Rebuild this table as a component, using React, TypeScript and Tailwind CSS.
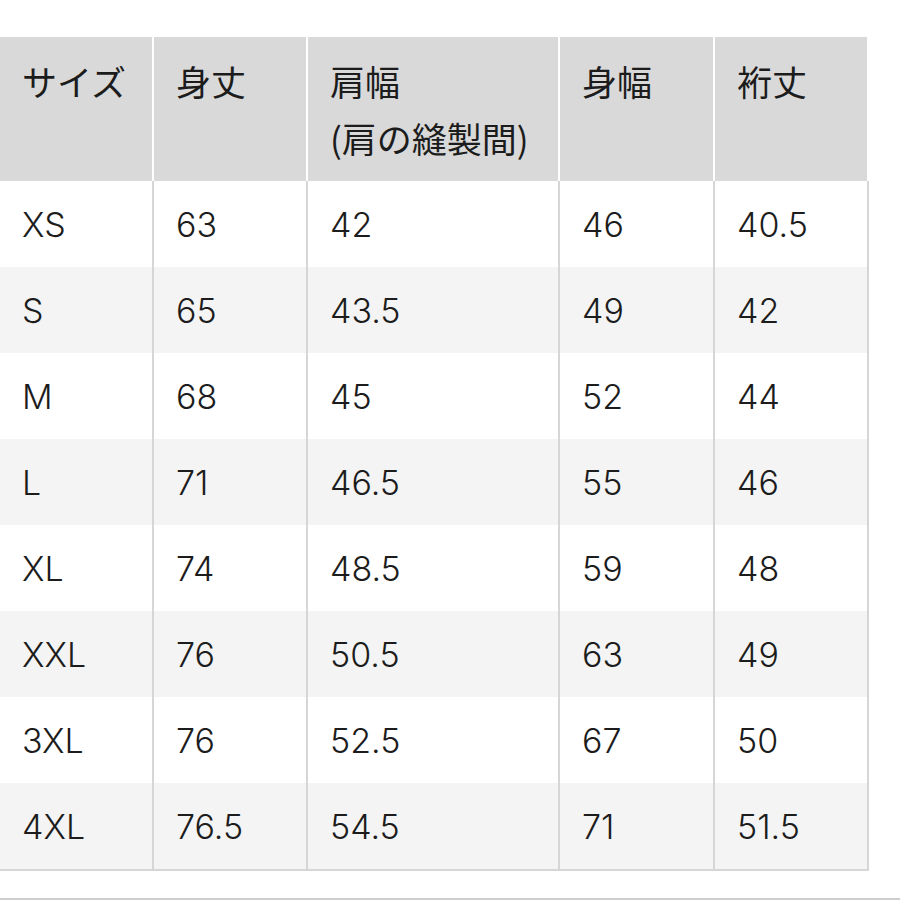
const headers = [["サイズ"], ["身丈"], ["肩幅", "(肩の縫製間)"], ["身幅"], ["裄丈"]];

const rows = [
  ["XS", "63", "42", "46", "40.5"],
  ["S", "65", "43.5", "49", "42"],
  ["M", "68", "45", "52", "44"],
  ["L", "71", "46.5", "55", "46"],
  ["XL", "74", "48.5", "59", "48"],
  ["XXL", "76", "50.5", "63", "49"],
  ["3XL", "76", "52.5", "67", "50"],
  ["4XL", "76.5", "54.5", "71", "51.5"],
];

const cols = "grid grid-cols-[152px_152px_250px_153px_152px] gap-x-[2px]";

export default function App() {
  return (
    <div
      className="w-[900px] h-[900px] bg-white text-[#1c1c1c] overflow-hidden"
      style={{ fontFamily: 'Inter, "Liberation Sans", "Noto Sans CJK JP", sans-serif' }}
    >
      <div className="pt-[37px] w-[869px]">
        {/* header */}
        <div className={`${cols} h-[144px] bg-white pr-[2px]`}>
          {headers.map((lines, i) => (
            <div
              key={i}
              className="bg-[#d9d9d9] pl-[22px] pt-[15px] text-[35px] leading-[57px]"
              style={{ fontFamily: '"Noto Sans CJK JP", "Liberation Sans", sans-serif' }}
            >
              {lines.map((l) => (
                <div key={l}>{l}</div>
              ))}
            </div>
          ))}
        </div>

        {/* body */}
        {rows.map((row, r) => (
          <div key={row[0]} className={`${cols} h-[86px] bg-[#d6d6d6] pr-[2px]`}>
            {row.map((v, c) => (
              <div
                key={c}
                className={`flex items-center pl-[22px] text-[34px] font-light ${r % 2 === 0 ? "bg-white" : "bg-[#f4f4f4]"}`}
              >
                {v}
              </div>
            ))}
          </div>
        ))}
        <div className="h-[2px] bg-[#d6d6d6]" />
      </div>

      <div className="mt-[27px] h-[2px] bg-[#cdcdcd]" />
    </div>
  );
}
